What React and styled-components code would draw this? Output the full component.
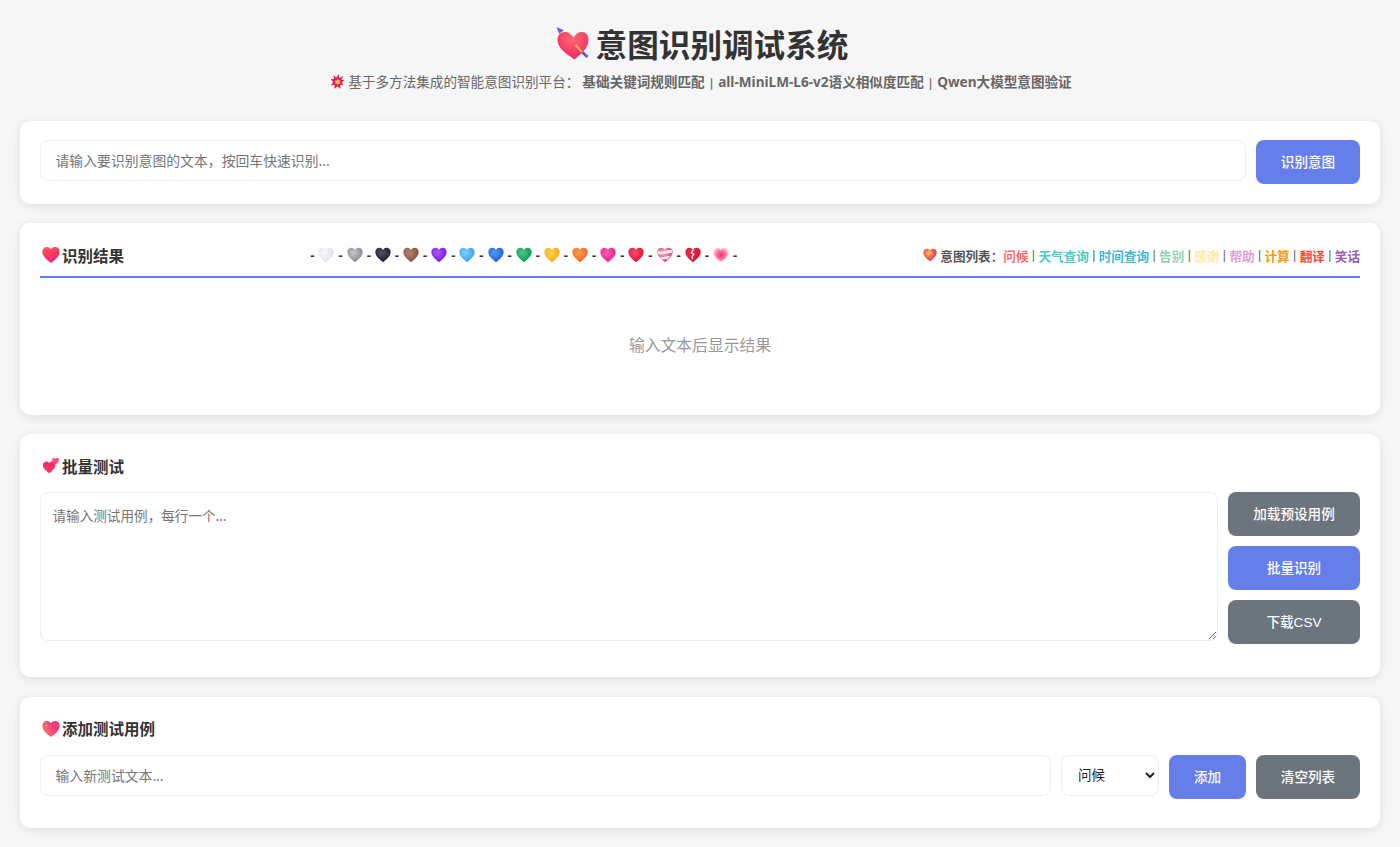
import React, { useId } from 'react';
import styled, { createGlobalStyle } from 'styled-components';

const HEART = 'M12 22C5.6 17.2 1.6 13.3 1.6 8.4 1.6 5 4.2 2.6 7.2 2.6c2 0 3.7 1 4.8 2.8 1.1-1.8 2.8-2.8 4.8-2.8 3 0 5.6 2.4 5.6 5.8 0 4.9-4 8.8-10.400 13.600z';
const HEART_BOX = '1.2 1.800 21.600 21';

const GlobalStyle = createGlobalStyle`
    * { box-sizing: border-box; }
    body {
        margin: 0;
        background: #f6f6f6;
        color: #333;
        font-family: "Noto Sans", "Noto Sans CJK SC", sans-serif;
    }
`;

const Page = styled.div`
    padding: 18px 20px 0;
`;

const Header = styled.header`
    text-align: center;
    margin-bottom: 28px;
`;

const Title = styled.h1`
    display: flex;
    align-items: center;
    justify-content: center;
    gap: 5px;
    height: 50px;
    margin: 0;
    padding-left: 3px;
    font-size: 31.600px;
    font-weight: 700;
    color: #333;
`;

const Subtitle = styled.p`
    display: flex;
    align-items: center;
    justify-content: center;
    gap: 3px;
    height: 24px;
    margin: 1px 0 0;
    padding-left: 2px;
    font-size: 13.600px;
    color: #666;
    white-space: pre;

    b { font-weight: 700; }
`;

const Card = styled.section`
    background: #fff;
    border-radius: 10px;
    box-shadow: 0 2px 10px rgba(0, 0, 0, 0.1);
    padding: ${(props) => props.$top || 19.5}px 20px ${(props) => props.$bottom || 19.5}px;
    margin-bottom: 19.200px;
`;

const Row = styled.div`
    display: flex;
    align-items: flex-start;
    gap: 10px;
`;

const Input = styled.input`
    flex: 1;
    min-width: 0;
    height: 41px;
    padding: 0 14.500px;
    border: 1px solid #eee;
    border-radius: 8px;
    outline: none;
    font-family: inherit;
    font-size: 13.850px;
    color: #333;

    &::placeholder { color: #757575; }
`;

const Button = styled.button`
    height: 44px;
    width: ${(props) => props.$width}px;
    flex: none;
    padding: 0 0 2px;
    border: none;
    border-radius: 8px;
    background: ${(props) => (props.$muted ? '#6c757d' : '#667eea')};
    color: #fff;
    font-family: "Liberation Sans", "Noto Sans CJK SC", sans-serif;
    font-size: 13.600px;
    font-weight: 500;
    cursor: pointer;
`;

const ResultHead = styled.div`
    display: flex;
    align-items: center;
    justify-content: space-between;
    height: 35.500px;
    border-bottom: 2px solid #667eea;
    padding-bottom: 8px;
`;

const SectionTitle = styled.h3`
    display: flex;
    align-items: center;
    gap: 2px;
    height: 25px;
    margin: 0;
    padding-left: 2px;
    font-size: 15.500px;
    font-weight: 700;
    color: #333;
`;

const HeartRow = styled.div`
    display: flex;
    align-items: center;
    gap: 4px;
    font-size: 13px;
    font-weight: 700;
    color: #333;
`;

const IntentList = styled.div`
    display: flex;
    align-items: center;
    font-size: 12.600px;
    color: #666;
    white-space: pre;
`;

const IntentLabel = styled.strong`
    display: flex;
    align-items: center;
    gap: 3px;
    color: #555;
    font-weight: 700;
`;

const Intent = styled.b`
    color: ${(props) => props.$color};
`;

const Separator = styled.span`
    font-family: "Liberation Sans", sans-serif;
    font-size: 12.200px;
`;

const SubtitleSeparator = styled.span`
    font-family: "Liberation Sans", sans-serif;
    font-weight: 400;
    margin: 0 1.200px;
`;

const Empty = styled.div`
    margin-top: 15.500px;
    padding: 40px;
    height: 102px;
    text-align: center;
    font-size: 15.800px;
    line-height: 22px;
    color: #999;
`;

const BatchBlock = styled(Row)`
    margin-top: 13.500px;
`;

const Textarea = styled.textarea`
    flex: 1;
    min-width: 0;
    height: 149px;
    padding: 12px 11.500px;
    border: 1px solid #eee;
    border-radius: 8px;
    outline: none;
    font-family: inherit;
    font-size: 13.600px;
    line-height: 22px;

    &::placeholder { color: #757575; }
`;

const ButtonStack = styled.div`
    display: flex;
    flex-direction: column;
    gap: 9.600px;
    width: 132px;
    flex: none;
`;

const Select = styled.select`
    width: 98px;
    height: 41px;
    flex: none;
    padding: 0 12px;
    border: 1px solid #eee;
    border-radius: 8px;
    background: #fff;
    font-family: inherit;
    font-size: 13.500px;
    color: #222;
`;

const Icon = styled.svg`
    display: block;
    flex: none;
    width: ${(props) => props.$size}px;
    height: ${(props) => props.$size}px;
`;

const Heart = ({ colors, size = 16, broken, ribbon, center }) => {
    const id = useId();
    return (
        <Icon viewBox={HEART_BOX} $size={size}>
            <defs>
                <radialGradient id={id} cx={center ? '0.5' : '0.4'} cy={center ? '0.5' : '0.35'} r={center ? '0.55' : '0.75'}>
                    <stop offset="0" stopColor={colors[0]} />
                    <stop offset="0.6" stopColor={colors[1]} />
                    <stop offset="1" stopColor={colors[2]} />
                </radialGradient>
            </defs>
            <path d={HEART} fill={`url(#${id})`} />
            {broken && <path d="M12.500 5l-2.500 4 3 2.500-2.500 3.500 1.500 3" fill="none" stroke="#fff" strokeWidth="1.500" />}
            {ribbon && <path d="M2.500 6.500c6 3.500 13-2.500 19-.500l.500 4c-6-2-13 4-19.500.500zM5 15c5 1 10-2 14-1l-3.500 4c-3-1-5.500 1-7.500 0z" fill="#f6e9ee" />}
        </Icon>
    );
};

const SectionHeart = ({ size = 18 }) => {
    const id = useId();
    return (
        <Icon viewBox={HEART_BOX} $size={size}>
            <defs>
                <linearGradient id={id} x1="0.2" y1="0" x2="0.6" y2="1">
                    <stop offset="0" stopColor="#ff5a63" />
                    <stop offset="0.55" stopColor="#f8335f" />
                    <stop offset="1" stopColor="#e02a94" />
                </linearGradient>
            </defs>
            <path d={HEART} fill={`url(#${id})`} />
        </Icon>
    );
};

const CupidHeart = () => {
    const id = useId();
    return (
        <Icon viewBox="0 0 36 36" $size={36}>
            <defs>
                <radialGradient id={id} cx="0.5" cy="0.25" r="0.85">
                    <stop offset="0" stopColor="#ff6a70" />
                    <stop offset="0.6" stopColor="#f53a66" />
                    <stop offset="1" stopColor="#d2257e" />
                </radialGradient>
            </defs>
            <path d="M19.500 34.500C10 28 2.500 23 2.500 14.500 2.500 10 6 7 9.500 7c4 0 7 2 9 5.500C20.500 9 23.500 7 27 7c3.500 0 6.500 3 6.500 7.500 0 8-6 13.500-14 20z" fill={`url(#${id})`} />
            <path d="M20.500 20l7.500 8" stroke="#f2a65a" strokeWidth="2.400" />
            <path d="M27 27l5.500 5" stroke="#7c4fc4" strokeWidth="3" />
            <path d="M1.500 2L9 5.300 4 8.800z" fill="#7a5ad8" />
        </Icon>
    );
};

const Burst = () => (
    <Icon viewBox="0 0 16 16" $size={15}>
        <path d="M9.500 0l.300 4.500L14 2l-1.800 4 3.300.500-3 2.500 2 3-3.500-.500.300 4.500-3.300-3-3.500 3 .500-4.500-4 .800L3.500 8.500.500 5.500l4-.200L3.500 1l3.300 3z" fill="#d8204a" />
        <path d="M8.500 5l.800 2 2-.500-1 2 1 2-2.300-.300-.800 2-1-2-2 .200 1-2-1.200-1.500 2 .000z" fill="#ffc83d" />
    </Icon>
);

const DoubleHeart = () => (
    <Icon viewBox="0 0 18 18" $size={18}>
        <ellipse cx="9" cy="8" rx="8.500" ry="3.500" fill="none" stroke="#e4dde8" strokeWidth="1" transform="rotate(-30 9 8)" />
        <g transform="translate(0 3) scale(0.6)"><path d={HEART} fill="#f2305f" /></g>
        <g transform="translate(9.500 0) scale(0.34)"><path d={HEART} fill="#f0508a" /></g>
    </Icon>
);

const FireHeart = () => {
    const id = useId();
    return (
        <Icon viewBox={HEART_BOX} $size={18}>
            <defs>
                <linearGradient id={id} x1="0" y1="0.7" x2="0.7" y2="0.4">
                    <stop offset="0" stopColor="#e88a3a" />
                    <stop offset="0.4" stopColor="#f2607a" />
                    <stop offset="1" stopColor="#f6357a" />
                </linearGradient>
            </defs>
            <path d={HEART} fill={`url(#${id})`} />
            <circle cx="7" cy="8" r="1" fill="#ffb36b" />
            <circle cx="16" cy="6.500" r="0.800" fill="#ff9ab5" />
        </Icon>
    );
};

const ROW_HEARTS = [
    { colors: ['#fbfaff', '#e9e6f3', '#d9d4e8'] },
    { colors: ['#c8c6c9', '#9c9a9f', '#807e88'] },
    { colors: ['#55526a', '#2d2a3d', '#1f1c30'] },
    { colors: ['#b88571', '#92604e', '#7a4b40'] },
    { colors: ['#a855f7', '#8a2be8', '#6b1fc8'] },
    { colors: ['#7fd0f7', '#4db0ef', '#3a96e0'] },
    { colors: ['#4f9bf5', '#2a6fe3', '#1e56c4'] },
    { colors: ['#45c97f', '#1fa862', '#118a5b'] },
    { colors: ['#ffd34d', '#fbb52c', '#f29a1f'] },
    { colors: ['#ff9a45', '#f9752e', '#e85d28'] },
    { colors: ['#ff5cb0', '#f0309a', '#d8208a'] },
    { colors: ['#ff4d62', '#e81f45', '#c81445'] },
    { colors: ['#f3a8c0', '#e4608c', '#d83a70'], ribbon: true },
    { colors: ['#ee3352', '#d41c3d', '#b81236'], broken: true },
    { colors: ['#ff2f6e', '#ff7fb0', '#ffd6e6'], center: true },
];

const INTENTS = [
    ['问候', '#ff6b6b'],
    ['天气查询', '#4ecdc4'],
    ['时间查询', '#45b7d1'],
    ['告别', '#96ceb4'],
    ['感谢', '#ffeaa7'],
    ['帮助', '#dda0dd'],
    ['计算', '#f39c12'],
    ['翻译', '#e74c3c'],
    ['笑话', '#9b59b6'],
];

export default function App() {
    return (
        <Page>
            <GlobalStyle />
            <Header>
                <Title><CupidHeart />意图识别调试系统</Title>
                <Subtitle>
                    <Burst />基于多方法集成的智能意图识别平台：<b>基础关键词规则匹配<SubtitleSeparator> | </SubtitleSeparator>all-MiniLM-L6-v2语义相似度匹配<SubtitleSeparator> | </SubtitleSeparator>Qwen大模型意图验证</b>
                </Subtitle>
            </Header>

            <Card $top={19} $bottom={20}>
                <Row>
                    <Input placeholder="请输入要识别意图的文本，按回车快速识别..." />
                    <Button $width={104}>识别意图</Button>
                </Row>
            </Card>

            <Card>
                <ResultHead>
                    <SectionTitle><SectionHeart />识别结果</SectionTitle>
                    <HeartRow>
                        -
                        {ROW_HEARTS.map((heart, i) => (
                            <React.Fragment key={i}>
                                <Heart {...heart} />
                                -
                            </React.Fragment>
                        ))}
                    </HeartRow>
                    <IntentList>
                        <IntentLabel><Heart colors={['#f9c64a', '#ee4f5a', '#d8304f']} size={14} />意图列表：</IntentLabel>
                        {INTENTS.map(([name, color], i) => (
                            <React.Fragment key={name}>
                                {i > 0 && <Separator> | </Separator>}
                                <Intent $color={color}>{name}</Intent>
                            </React.Fragment>
                        ))}
                    </IntentList>
                </ResultHead>
                <Empty>输入文本后显示结果</Empty>
            </Card>

            <Card $bottom={33.8}>
                <SectionTitle><DoubleHeart />批量测试</SectionTitle>
                <BatchBlock>
                    <Textarea placeholder="请输入测试用例，每行一个..." />
                    <ButtonStack>
                        <Button $muted $width={132}>加载预设用例</Button>
                        <Button $width={132}>批量识别</Button>
                        <Button $muted $width={132}>下载CSV</Button>
                    </ButtonStack>
                </BatchBlock>
            </Card>

            <Card $bottom={29}>
                <SectionTitle><FireHeart />添加测试用例</SectionTitle>
                <BatchBlock>
                    <Input placeholder="输入新测试文本..." />
                    <Select defaultValue="问候">
                        {INTENTS.map(([name]) => <option key={name}>{name}</option>)}
                    </Select>
                    <Button $width={77}>添加</Button>
                    <Button $muted $width={104}>清空列表</Button>
                </BatchBlock>
            </Card>
        </Page>
    );
}
